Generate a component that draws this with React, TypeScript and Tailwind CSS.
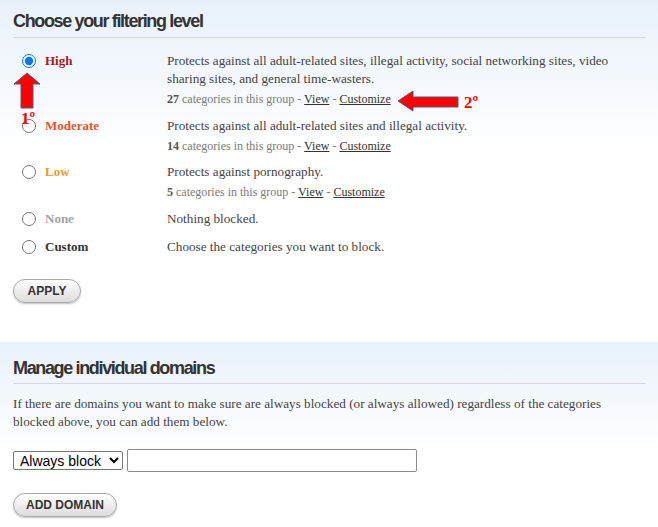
import React from "react";

type Level = {
  name: string;
  color: string;
  desc: string;
  count?: number;
  checked?: boolean;
};

const levels: Level[] = [
  {
    name: "High",
    color: "text-[#a31b1b]",
    desc: "Protects against all adult-related sites, illegal activity, social networking sites, video sharing sites, and general time-wasters.",
    count: 27,
    checked: true,
  },
  {
    name: "Moderate",
    color: "text-[#e9542b]",
    desc: "Protects against all adult-related sites and illegal activity.",
    count: 14,
  },
  {
    name: "Low",
    color: "text-[#f7961e]",
    desc: "Protects against pornography.",
    count: 5,
  },
  { name: "None", color: "text-[#a3a3a3]", desc: "Nothing blocked." },
  { name: "Custom", color: "text-[#333333]", desc: "Choose the categories you want to block." },
];

function PillButton({ children, w }: { children: React.ReactNode; w: string }) {
  return (
    <button
      className={`${w} h-[24px] rounded-full border border-[#a9a9a9] bg-gradient-to-b from-white to-[#dcdcdc] shadow-[0_1px_2px_rgba(0,0,0,0.25)] text-[12px] font-bold text-[#333] [font-family:'Liberation_Sans',Arial,sans-serif] flex items-center justify-center`}
    >
      {children}
    </button>
  );
}

export default function App() {
  return (
    <div className="relative w-[658px] h-[527px] bg-white overflow-hidden [font-family:'Liberation_Serif','Times_New_Roman',serif] text-[#444]">
      {/* Section 1 */}
      <section className="bg-gradient-to-b from-[#e8f1fa] to-white to-[45%] px-[13px] pt-[10px] pb-[39px]">
        <h2 className="[font-family:'Liberation_Sans',Arial,sans-serif] font-bold text-[18px] leading-[22px] tracking-[-1.35px] text-[#333] pb-[5px] border-b border-[#d8d8d8] w-[632px]">
          Choose your filtering level
        </h2>
        <div className="mt-[9px]">
          {levels.map((l) => (
            <div key={l.name} className="flex py-[5px]">
              <div className="w-[32px] pl-[9px] h-[18px] flex items-center">
                <input
                  type="radio"
                  name="level"
                  defaultChecked={l.checked}
                  className="m-0 w-[14px] h-[14px]"
                />
              </div>
              <div className={`w-[122px] font-bold text-[13px] leading-[18px] ${l.color}`}>{l.name}</div>
              <div className="w-[470px]">
                <div className="text-[13.2px] leading-[18px] text-[#444]">{l.desc}</div>
                {l.count !== undefined && (
                  <div className="mt-[3px] mb-[-0.5px] text-[12px] leading-[16px] text-[#7a7a7a]">
                    <span className="font-bold text-[#555]">{l.count}</span> categories in this group -{" "}
                    <a className="underline text-[#333]">View</a> -{" "}
                    <a className="underline text-[#333]">Customize</a>
                  </div>
                )}
              </div>
            </div>
          ))}
        </div>
        <div className="mt-[18px]">
          <PillButton w="w-[68px]">APPLY</PillButton>
        </div>
      </section>

      {/* Section 2 */}
      <section className="bg-gradient-to-b from-[#e8f1fa] to-white to-[55%] px-[13px] pt-[15px] pb-[20px]">
        <h2 className="[font-family:'Liberation_Sans',Arial,sans-serif] font-bold text-[18px] leading-[22px] tracking-[-1.35px] text-[#333] pb-[4px] border-b border-[#d8d8d8] w-[632px]">
          Manage individual domains
        </h2>
        <p className="mt-[11px] text-[13.2px] leading-[18px] text-[#444] w-[630px]">
          If there are domains you want to make sure are always blocked (or always allowed) regardless of the categories
          blocked above, you can add them below.
        </p>
        <div className="mt-[18px] flex items-center gap-[4px]">
          <select className="h-[19px] w-[110px] border border-[#767676] rounded-[2px] bg-white text-[14px] leading-[16px] text-black [font-family:'Liberation_Sans',Arial,sans-serif] px-[2px]">
            <option>Always block</option>
            <option>Always allow</option>
          </select>
          <input
            type="text"
            className="h-[23px] w-[290px] border border-[#8a8a8a] rounded-[2px] bg-white"
          />
        </div>
        <div className="mt-[21px]">
          <PillButton w="w-[104px]">ADD DOMAIN</PillButton>
        </div>
      </section>

      {/* Annotations */}
      <svg className="absolute left-0 top-0 pointer-events-none" width="658" height="527">
        <polygon
          points="27,73 40,84 33,84 33,108 21,108 21,84 14,84"
          fill="#ff0000"
          stroke="#4b5a86"
          strokeWidth="1"
        />
        <polygon
          points="398,101 413,91 413,97 458,97 458,107 413,107 413,111"
          fill="#ff0000"
          stroke="#4b5a86"
          strokeWidth="1"
        />
      </svg>
      <div className="absolute left-[21px] top-[109px] text-[#ff0000] font-bold text-[17px] leading-[20px] [font-family:'Liberation_Serif',serif]">
        1º
      </div>
      <div className="absolute left-[464px] top-[93px] text-[#ff0000] font-bold text-[17px] leading-[20px] [font-family:'Liberation_Serif',serif]">
        2º
      </div>
    </div>
  );
}
